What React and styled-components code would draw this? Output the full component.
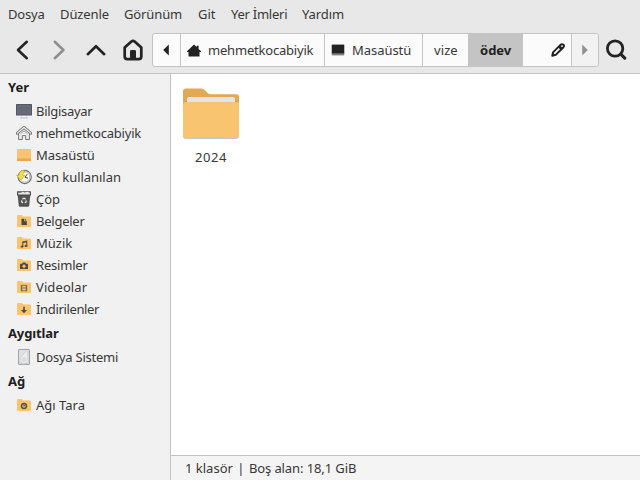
import React from "react";
import styled, { createGlobalStyle } from "styled-components";

const GlobalStyle = createGlobalStyle`
  * { box-sizing: border-box; }
  body { margin: 0; overflow: hidden; }
  svg { display: block; flex: none; }
`;

const Window = styled.div`
  display: flex;
  flex-direction: column;
  width: 640px;
  height: 480px;
  background: #f1f1f1;
  color: #373737;
  font: 13px/20px "Noto Sans", sans-serif;
  white-space: nowrap;
`;

const Header = styled.header`
  height: 74px;
  flex: none;
  background: #e8e8e8;
  border-bottom: 1px solid #c3c3c3;
`;

const MenuBar = styled.nav`
  display: flex;
  height: 28px;
  padding: 4px 8px 0;
`;

const MenuItem = styled.span`
  width: ${(p) => p.$width}px;
  letter-spacing: ${(p) => p.$tracking || 0}px;
`;

const Toolbar = styled.div`
  display: flex;
  align-items: flex-start;
  padding-top: 5px;
`;

const NavButtons = styled.div`
  display: flex;
  flex: none;
  width: 152px;
  padding: 5px 0 0 10px;
`;

const NavButton = styled.button`
  flex: none;
  width: 37px;
  height: 24px;
  padding: 0;
  border: 0;
  background: none;
  color: ${(p) => (p.disabled ? "#8f8f8f" : "#232323")};
`;

const PathBar = styled.div`
  display: flex;
  flex: none;
  width: 447px;
  height: 34px;
  border: 1px solid #c3c3c3;
  border-radius: 3px;
  background: #fbfbfb;
  overflow: hidden;
`;

const Crumb = styled.div`
  display: flex;
  align-items: center;
  flex: none;
  width: ${(p) => p.$width}px;
  padding-left: ${(p) => p.$pad}px;
  gap: 7px;
  border-right: 1px solid ${(p) => (p.$muted ? "transparent" : "#c6c6c6")};
  background: ${(p) => (p.$active ? "#c4c4c4" : p.$muted ? "#f2f2f2" : "transparent")};
  color: ${(p) => (p.$active ? "#202020" : "#373737")};
  font-weight: ${(p) => (p.$active ? 700 : 400)};
`;

const Label = styled.span`
  letter-spacing: ${(p) => p.$tracking || 0}px;
`;

const SearchButton = styled(NavButton)`
  margin: 5px 0 0 5px;
  width: 24px;
  color: #232323;
`;

const Body = styled.div`
  display: flex;
  flex: 1;
  min-height: 0;
`;

const Sidebar = styled.aside`
  width: 171px;
  flex: none;
  background: #f1f1f1;
  border-right: 1px solid #c3c3c3;
`;

const Heading = styled.div`
  height: 26px;
  padding: 4px 0 0 8px;
  color: #202020;
  font-weight: 700;
  line-height: 19px;
  letter-spacing: ${(p) => p.$tracking || 0}px;
`;

const Place = styled.div`
  display: flex;
  align-items: center;
  gap: 4px;
  height: 22px;
  padding-left: 16px;
`;

const Main = styled.main`
  display: flex;
  flex-direction: column;
  flex: 1;
  background: #fff;
`;

const Files = styled.div`
  flex: 1;
  padding: 14px 0 0 8px;
`;

const FileItem = styled.div`
  display: flex;
  flex-direction: column;
  align-items: center;
  width: 64px;
  gap: 7px;
`;

const StatusBar = styled.footer`
  display: flex;
  height: 25px;
  padding: 2px 0 0 14px;
  background: #f4f4f4;
  border-top: 1px solid #c3c3c3;
`;

const Divider = styled.span`
  width: 16px;
  text-align: center;
`;

const Chevron = ({ d }) => (
  <svg width="24" height="24" viewBox="0 0 24 24" fill="none" stroke="currentColor" strokeWidth="2.6" strokeLinecap="round" strokeLinejoin="round">
    <path d={d} />
  </svg>
);

const HomeOutline = () => (
  <svg width="24" height="24" viewBox="0 0 24 24">
    <path d="M3.7 9.6 10.4 3.5Q12 2.1 13.6 3.5L20.3 9.6V18.6Q20.3 21.2 17.7 21.2H6.3Q3.7 21.2 3.7 18.6Z" fill="none" stroke="currentColor" strokeWidth="2.7" strokeLinejoin="round" />
    <path d="M9 21V13.4Q9 12 10.4 12H13.6Q15 12 15 13.4V21Z" fill="currentColor" />
  </svg>
);

const Search = () => (
  <svg width="24" height="24" viewBox="0 0 24 24" fill="none" stroke="currentColor" strokeLinecap="round">
    <circle cx="11.1" cy="10.5" r="7.7" strokeWidth="2.8" />
    <path d="m17 16.4 3.8 3.8" strokeWidth="3.1" />
  </svg>
);

const Arrow = ({ right }) => (
  <svg width="6" height="12" viewBox="0 0 6 12">
    <path d={right ? "M.2.6 5.8 6 .2 11.4Z" : "M5.8.6.2 6l5.6 5.4Z"} fill={right ? "#929292" : "#222"} />
  </svg>
);

const HomeSolid = () => (
  <svg width="14" height="13" viewBox="0 0 14 13">
    <path d="M7 .4 9.6 3V1.7h2v3.2L14 7.2v.7h-1.5v4.7H1.5V7.9H0v-.7Z" fill="#222" />
  </svg>
);

const DesktopMono = () => (
  <svg width="14" height="12" viewBox="0 0 14 12">
    <rect x=".8" y=".5" width="12.4" height="11" rx=".6" fill="#999" />
    <path d="M.8.8h12.4v8.8H.8Z" fill="#222" />
    <path d="M.8 9.6h12.4v.8H.8Z" fill="#666" />
  </svg>
);

const Pencil = () => (
  <svg width="14" height="14" viewBox="0 0 14 14" fill="none" stroke="#222" strokeLinejoin="round">
    <path d="M1.3 12.7 2 9.4 9.5 1.9Q11.1.6 12.4 1.7T12.2 4.5L4.7 11.9Z" strokeWidth="2" />
    <path d="m8.8 2 3.2 3.2L9.9 7.2 6.8 4.1Z" fill="#222" stroke="none" />
    <path d="m1.2 12.8.7-3 2.3 2.3Z" fill="#222" stroke="none" />
  </svg>
);

const FOLDER_MARKS = {
  document: <path d="M5.5 5.8H8.3V8.3H10.8V12H5.5Z M9 5.8 10.8 7.6H9Z" fill="#4b473f" />,
  music: (
    <g fill="#5c523f">
      <path d="M6.2 6.4 11.3 5.6V11H10.2V7.6L7.3 8.1V12H6.2Z" />
      <ellipse cx="6" cy="11.6" rx="1.5" ry="1.1" />
      <ellipse cx="10" cy="10.9" rx="1.5" ry="1.1" />
    </g>
  ),
  camera: (
    <>
      <path d="M4 7.3Q4 6.7 4.6 6.7H6L6.8 5.4H9.3L10.1 6.7H11.4Q12 6.7 12 7.3V12H4Z" fill="#504b42" />
      <circle cx="8" cy="9.2" r="1.6" fill="#f9c46c" />
    </>
  ),
  film: (
    <g fill="none" stroke="#77674f">
      <path d="M5.5 6V12.2M10.5 6V12.2" strokeWidth="1.3" />
      <path d="M5.2 6.4H10.8M5.2 9H10.8M5.2 11.7H10.8" strokeWidth=".9" />
    </g>
  ),
  download: <path d="M7.2 5.8H8.8V8.9H11L8 12.3 5 8.9H7.2Z" fill="#504a3e" />,
  network: (
    <>
      <circle cx="8" cy="9" r="2.5" fill="none" stroke="#5c5547" strokeWidth="1.5" />
      <path d="m7.2 7 2.5 1.8-1.8.7V11Z" fill="#5c5547" />
    </>
  ),
};

const FolderIcon = ({ mark }) => (
  <svg width="16" height="16" viewBox="0 0 16 16">
    <path d="M1 3Q1 2 2 2H5.4Q6 2 6.6 2.8L7.3 3.5H14Q15 3.5 15 4.4V13Q15 14 14 14H2Q1 14 1 13Z" fill="#f9c46f" />
    {FOLDER_MARKS[mark]}
  </svg>
);

const ComputerIcon = () => (
  <svg width="16" height="16" viewBox="0 0 16 16">
    <path d="M5.2 13.2H10.8L12 15.5H4Z" fill="#c3c5d0" />
    <path d="M5.8 12.6H10.2V14.4H5.8Z" fill="#f5f6fa" />
    <rect y="1" width="16" height="11.6" rx=".7" fill="#4c505d" />
    <rect x=".8" y="1.7" width="14.4" height="10" fill="#666a77" />
  </svg>
);

const UserHomeIcon = () => (
  <svg width="16" height="16" viewBox="0 0 16 16" fill="none" strokeLinejoin="round">
    <path d="M2.6 8V14.5H6.3V10.6H9.7V14.5H13.4V8L8 3.5Z" fill="#eee" stroke="#777" />
    <path d="M1 8.3 8 2.4 15 8.3" stroke="#6d6d6d" strokeWidth="2.7" strokeLinecap="round" />
    <path d="M1.2 8.1 8 2.5 14.8 8.1" stroke="#fafafa" strokeWidth="1.2" strokeLinecap="round" />
    <path d="M4.5 8.6 8 5.8 11.5 8.6" stroke="#888" strokeWidth=".8" />
  </svg>
);

const DesktopIcon = () => (
  <svg width="16" height="16" viewBox="0 0 16 16">
    <rect x="1" y="2" width="14" height="12" rx=".6" fill="#f9c46f" />
    <path d="M1 11.5H15V13.5Q15 14 14.5 14H1.5Q1 14 1 13.5Z" fill="#e0aa50" />
  </svg>
);

const RecentIcon = () => (
  <svg width="16" height="16" viewBox="0 0 16 16">
    <circle cx="8.7" cy="8" r="6.6" fill="#efefec" stroke="#6b6e69" strokeWidth="1.1" />
    <circle cx="8.7" cy="8" r="5.1" fill="#fafafa" stroke="#b4b6b2" strokeWidth=".9" />
    <path d="M11.2 5.2 9 8.3 12 9.2" fill="none" stroke="#444" strokeWidth="1" />
    <path d="M7.8 1.2Q3.2 1.6 3 6.3H.6L4.9 10.9 9 6.4H6.6Q6.6 4 8.3 3.3Z" fill="#f6e04a" stroke="#c9a91c" strokeWidth=".7" />
  </svg>
);

const TrashIcon = () => (
  <svg width="16" height="16" viewBox="0 0 16 16">
    <path d="M1.6 3H14.4L13.2 14.8Q13.1 15.8 12.1 15.8H3.9Q2.9 15.8 2.8 14.8Z" fill="#535353" />
    <path d="M1 .8Q1 .2 1.6.2H14.4Q15 .2 15 .8V4.6H1Z" fill="#4a4a4a" />
    <path d="M2.2 1.4 4.5 1.8 6.8.8 8.7 1.6 11.1.8 13.8 1.4V3.4H2.2Z" fill="#e7e7e7" />
    <path d="M6.3 8.3 8 7.1 9.7 8.3M10.3 9.4 9.9 11.3 8.7 11.8M7.1 11.8 5.7 11.1 5.7 9.2" fill="none" stroke="#e6e6e6" strokeWidth="1.2" strokeLinejoin="round" />
  </svg>
);

const DriveIcon = () => (
  <svg width="16" height="16" viewBox="0 0 16 16">
    <rect x="2.5" y=".5" width="11" height="15" rx=".5" fill="#dfe0e2" stroke="#a1a3a7" />
    <path d="M11.8 2.4V9.5A4 4 0 1 1 5 8.3L9.3 3Q10.5 1.8 11.8 2.4Z" fill="#eceded" stroke="#c8cacd" strokeWidth=".7" />
    <circle cx="8" cy="10.5" r="1.7" fill="#e5e6e7" stroke="#c8cacd" strokeWidth=".7" />
    <path d="M3.3 14.2H12.7" stroke="#c8cacd" strokeWidth=".7" />
  </svg>
);

const BigFolder = () => (
  <svg width="56" height="52" viewBox="0 0 56 52">
    <path d="M0 14H56V48Q56 51 53 51H3Q0 51 0 48Z" fill="#c8c8ca" />
    <path d="M0 3Q0 .5 2.5 .5H18Q20.4 .5 22.2 2.4L24.6 5Q26 6.3 28 6.3H53.5Q56 6.3 56 9V20H0Z" fill="#e1a953" />
    <path d="M0 16.5 2.5 13.5H53.5L56 16.5V20H0Z" fill="#b98332" />
    <path d="M4 17V11.5Q4 9 6.5 9H49.5Q52 9 52 11.5V17Z" fill="#e4e4e4" />
    <path d="M0 16.5Q0 14 2.5 14H53.5Q56 14 56 16.5V47.2Q56 50 53 50H3Q0 50 0 47.2Z" fill="#f9c46f" />
  </svg>
);

const MENU = [
  ["Dosya", 52, -0.2], ["Düzenle", 64, -0.1], ["Görünüm", 74, -0.12],
  ["Git", 33, 0], ["Yer İmleri", 71, -0.25], ["Yardım", 50, -0.1],
];

const GROUPS = [
  { title: "Yer", places: [
    ["Bilgisayar", <ComputerIcon />, -0.3],
    ["mehmetkocabiyik", <UserHomeIcon />, -0.22],
    ["Masaüstü", <DesktopIcon />, -0.1],
    ["Son kullanılan", <RecentIcon />, -0.04],
    ["Çöp", <TrashIcon />, 0],
    ["Belgeler", <FolderIcon mark="document" />, -0.25],
    ["Müzik", <FolderIcon mark="music" />, 0],
    ["Resimler", <FolderIcon mark="camera" />, -0.2],
    ["Videolar", <FolderIcon mark="film" />, 0.1],
    ["İndirilenler", <FolderIcon mark="download" />, -0.35],
  ] },
  { title: "Aygıtlar", tracking: -0.13, places: [["Dosya Sistemi", <DriveIcon />, -0.23]] },
  { title: "Ağ", places: [["Ağı Tara", <FolderIcon mark="network" />, 0]] },
];

export default function App() {
  return (
    <Window>
      <GlobalStyle />
      <Header>
        <MenuBar>
          {MENU.map(([name, width, tracking]) => (
            <MenuItem key={name} $width={width} $tracking={tracking}>{name}</MenuItem>
          ))}
        </MenuBar>
        <Toolbar>
          <NavButtons>
            <NavButton><Chevron d="M16.8 3.8 8 12 16.8 20.2" /></NavButton>
            <NavButton disabled><Chevron d="M7.8 3.8 16.4 12 7.8 20.2" /></NavButton>
            <NavButton><Chevron d="M3.8 16.2 12 8.2 20.2 16.2" /></NavButton>
            <NavButton><HomeOutline /></NavButton>
          </NavButtons>
          <PathBar>
            <Crumb $width={28} $pad={10}><Arrow /></Crumb>
            <Crumb $width={144} $pad={6}><HomeSolid /><Label $tracking={-0.2}>mehmetkocabiyik</Label></Crumb>
            <Crumb $width={98} $pad={6}><DesktopMono /><Label $tracking={-0.05}>Masaüstü</Label></Crumb>
            <Crumb $width={46} $pad={11}><Label $tracking={0.1}>vize</Label></Crumb>
            <Crumb $width={54} $pad={11} $active><Label>ödev</Label></Crumb>
            <Crumb $width={49} $pad={28}><Pencil /></Crumb>
            <Crumb $width={26} $pad={10} $muted><Arrow right /></Crumb>
          </PathBar>
          <SearchButton><Search /></SearchButton>
        </Toolbar>
      </Header>
      <Body>
        <Sidebar>
          {GROUPS.map((group) => (
            <React.Fragment key={group.title}>
              <Heading $tracking={group.tracking}>{group.title}</Heading>
              {group.places.map(([name, icon, tracking]) => (
                <Place key={name}>{icon}<Label $tracking={tracking}>{name}</Label></Place>
              ))}
            </React.Fragment>
          ))}
        </Sidebar>
        <Main>
          <Files>
            <FileItem><BigFolder /><Label $tracking={0.6}>2024</Label></FileItem>
          </Files>
          <StatusBar>
            <span>1 klasör</span><Divider>|</Divider><Label $tracking={-0.1}>Boş alan: 18,1 GiB</Label>
          </StatusBar>
        </Main>
      </Body>
    </Window>
  );
}
